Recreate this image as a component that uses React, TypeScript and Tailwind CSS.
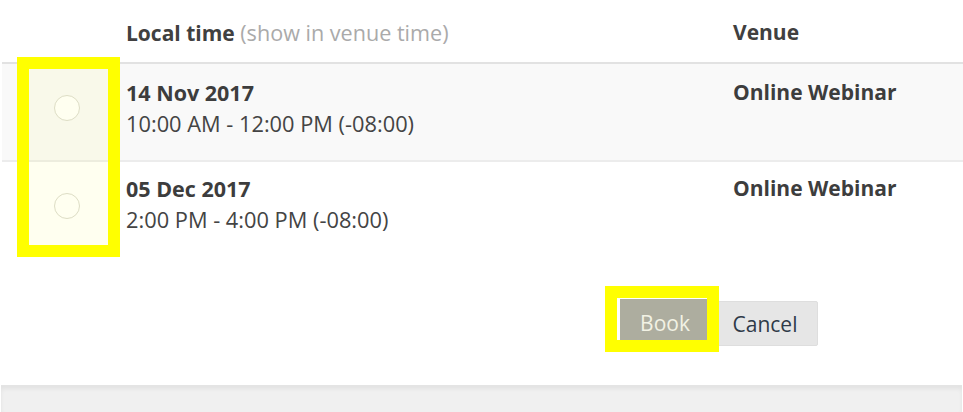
const sessions = [
  { date: "14 Nov 2017", time: "10:00 AM - 12:00 PM (-08:00)", venue: "Online Webinar", shaded: true },
  { date: "05 Dec 2017", time: "2:00 PM - 4:00 PM (-08:00)", venue: "Online Webinar", shaded: false },
];

export default function App() {
  return (
    <div
      className="relative h-[412px] w-[963px] overflow-hidden bg-white text-[21px] leading-[31px] text-[#444]"
      style={{ fontFamily: '"Open Sans", "Noto Sans", sans-serif' }}
    >
      {/* Sessions table */}
      <div className="relative ml-[2px]">
        <div className="flex border-b-2 border-[#e2e2e2] pt-[17px] pb-[13px]">
          <div className="w-[124px] shrink-0" />
          <div className="w-[607px] shrink-0">
            <span className="font-bold text-[#404040]">Local time</span>{" "}
            <span className="text-[21.6px] text-[#aaa]">(show in venue time)</span>
          </div>
          <div className="font-bold text-[#404040]">Venue</div>
        </div>

        {sessions.map((s, i) => (
          <div
            key={i}
            className={`flex ${s.shaded ? "bg-[#f9f9f9]" : "bg-white"} ${
              i === 0 ? "h-[98px] border-b-2 border-[#ececec] pt-[13px]" : "h-[96px] pt-[11px]"
            }`}
          >
            <div className={`w-[124px] shrink-0 pl-[52px] ${i === 0 ? "pt-[18px]" : "pt-[20px]"}`}>
              <div className="h-[26px] w-[26px] rounded-full border border-[#dcdcd2] bg-white" />
            </div>
            <div className="w-[607px] shrink-0">
              <div className="text-[21.5px] font-bold text-[#3d3d3d]">{s.date}</div>
              <div className="text-[21.8px]">{s.time}</div>
            </div>
            <div className="font-bold text-[#3d3d3d]">{s.venue}</div>
          </div>
        ))}

        {/* highlight over the radio column */}
        <div className="absolute left-[15px] top-[57px] h-[200px] w-[103px] border-[12px] border-[#ffff00] bg-[rgba(255,255,0,0.06)]" />
      </div>

      {/* Actions */}
      <div className="mt-[41px] flex items-start pl-[620px]">
        <div className="relative">
          <button className="h-[47px] w-[90px] bg-[#adad9f] pt-[2px] text-[21px] text-[#f2f2e4]">Book</button>
          <div className="absolute -left-[15px] -top-[13px] z-10 h-[66px] w-[114px] border-[12px] border-[#ffff00]" />
        </div>
        <button className="ml-[2px] mt-[2px] h-[45px] w-[106px] rounded-[2px] border border-[#dedede] bg-[#e6e6e6] pt-[2px] text-[21px] text-[#2f3a48]">
          Cancel
        </button>
      </div>

      {/* footer strip */}
      <div className="absolute bottom-0 left-[1px] right-[1px] h-[27px] border-t border-[#e4e4e4] bg-[#f0f0f0] shadow-[inset_0_3px_4px_rgba(0,0,0,0.06)]" />
    </div>
  );
}
